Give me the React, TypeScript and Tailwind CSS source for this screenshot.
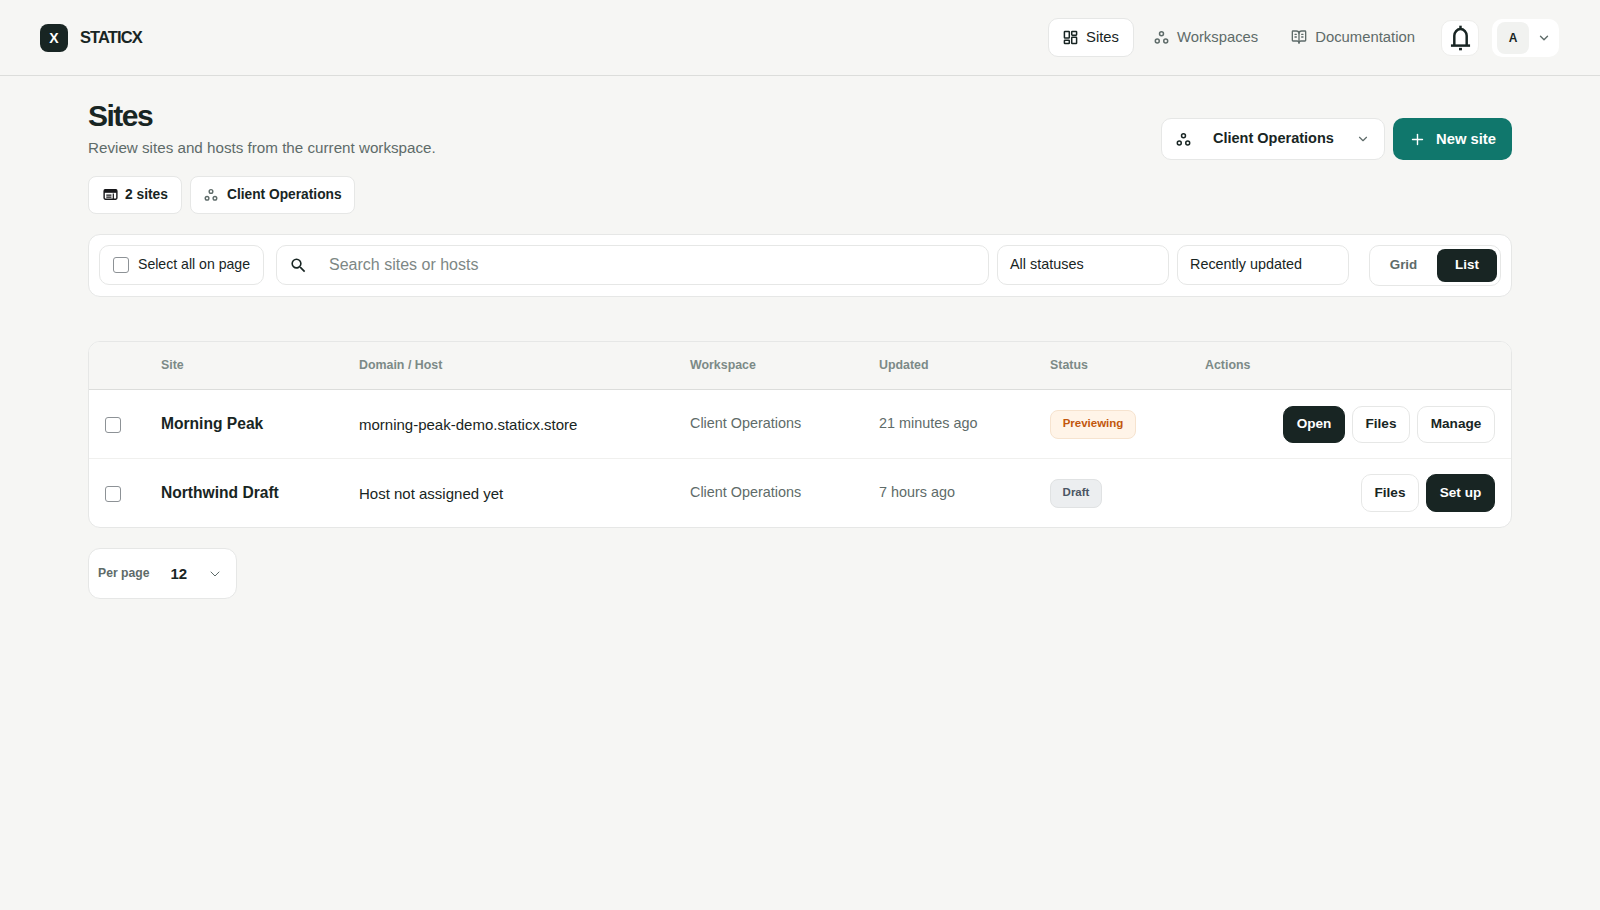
import React from "react";
import { ChevronDown, Plus, BookOpenText } from "lucide-react";
import { MdSearch } from "react-icons/md";

const Circles = ({ className }: { className?: string }) => (
  <svg viewBox="0 0 16 16" fill="none" stroke="currentColor" strokeWidth="1.6" className={className}>
    <circle cx="8" cy="4" r="2.1" />
    <circle cx="3.5" cy="11.8" r="2.1" />
    <circle cx="12.5" cy="11.8" r="2.1" />
  </svg>
);

const Dashboard = () => (
  <svg viewBox="0 0 16 16" fill="none" stroke="currentColor" strokeWidth="1.6" className="w-[15px] h-[15px]">
    <rect x="1.5" y="1.5" width="5.2" height="7" rx="0.6" />
    <rect x="9.3" y="1.5" width="5.2" height="4" rx="0.6" />
    <rect x="9.3" y="7.8" width="5.2" height="6.7" rx="0.6" />
    <rect x="1.5" y="10.8" width="5.2" height="3.7" rx="0.6" />
  </svg>
);

const Bell = () => (
  <svg viewBox="0 0 24 24" fill="none" stroke="currentColor" strokeWidth="2.2" className="w-[27px] h-[27px] text-[#182523]">
    <path d="M12 1.5v2.5" />
    <path d="M6.5 19.2V10.5a5.5 6 0 0 1 11 0v8.7" />
    <path d="M3.5 19.2h17" />
    <path d="M10.7 22.3h2.6" />
  </svg>
);

const SiteChipIcon = () => (
  <svg viewBox="0 0 16 16" fill="none" className="w-[15px] h-[15px] -mt-px text-[#18181b]">
    <rect x="1.2" y="3" width="13.6" height="10" rx="1.2" stroke="currentColor" strokeWidth="1.5" />
    <rect x="1.2" y="3" width="13.6" height="3.2" fill="currentColor" />
    <path d="M3.5 8.6H9M3.5 10.8H9M11 7v6" stroke="currentColor" strokeWidth="1.3" />
  </svg>
);

const Check = () => <span className="block w-4 h-4 rounded-[3px] border border-[#8d9296] bg-white" />;

const Btn = ({ dark, children, w }: { dark?: boolean; children: React.ReactNode; w: string }) => (
  <span
    className={
      "flex items-center justify-center rounded-[10px] text-[13.6px] font-bold border " +
      w +
      (dark ? " bg-[#182523] border-[#182523] text-white" : " bg-white border-[#e6e7e6] text-[#182523]")
    }
  >
    {children}
  </span>
);

const rowCols = "grid grid-cols-[56px_198px_331px_189px_171px_155px_1fr] items-center";

export default function App() {
  return (
    <div className="min-h-[910px] bg-[#f6f6f4] text-[#182523] font-['Liberation_Sans',Arial,sans-serif]">
      <header className="h-[76px] border-b border-[#dcdddb] flex items-center pl-10 pr-[41px]">
        <div className="w-7 h-7 rounded-lg bg-[#182523] flex items-center justify-center text-white text-sm font-bold">X</div>
        <span className="ml-3 text-[16.5px] font-bold tracking-[-0.9px]">STATICX</span>
        <nav className="ml-auto flex items-center">
          <a className="flex items-center h-[39px] w-[86px] pl-[14px] gap-[8px] bg-white border border-[#e6e7e6] rounded-[10px] text-[14.8px]">
            <Dashboard />
            Sites
          </a>
          <a className="flex items-center ml-5 gap-2 text-[14.8px] text-[#5e6b69]">
            <Circles className="w-[15px] h-[15px]" />
            Workspaces
          </a>
          <a className="flex items-center ml-[33px] gap-2 text-[14.85px] text-[#5e6b69]">
            <BookOpenText className="w-4 h-4" strokeWidth={2} />
            Documentation
          </a>
          <span className="ml-[26px] w-[38px] h-9 bg-white border border-[#eeeeec] rounded-[10px] flex items-center justify-center">
            <Bell />
          </span>
          <span className="ml-[13px] w-[67px] h-[38px] bg-white rounded-[10px] flex items-center pl-[5px]">
            <span className="w-8 h-8 rounded-lg bg-[#f1f2f0] flex items-center justify-center text-xs font-bold">A</span>
            <ChevronDown className="ml-2 w-[14px] h-[14px] text-[#5e6b69]" strokeWidth={2.4} />
          </span>
        </nav>
      </header>

      <main className="mx-[88px]">
        <div className="flex justify-between pt-[23px]">
          <div>
            <h1 className="text-[30px] leading-[34px] font-bold tracking-[-1.5px]">Sites</h1>
            <p className="mt-[5px] text-[15.2px] leading-5 text-[#5e6b69]">Review sites and hosts from the current workspace.</p>
          </div>
          <div className="flex gap-2 mt-[19px] h-[42px]">
            <span className="flex items-center w-[224px] px-[14px] bg-white border border-[#e6e7e6] rounded-[10px] text-[14.5px] font-bold">
              <Circles className="w-[15px] h-[15px]" />
              <span className="ml-[22px]">Client Operations</span>
              <ChevronDown className="ml-auto w-[14px] h-[14px] text-[#5e6b69]" />
            </span>
            <span className="flex items-center justify-center gap-[10px] w-[119px] bg-[#10776c] rounded-[10px] text-white text-[14.8px] font-bold">
              <Plus className="w-[17px] h-[17px]" />
              New site
            </span>
          </div>
        </div>

        <div className="flex gap-2 mt-[16px]">
          <span className="flex items-center h-[38px] w-[94px] pl-[14px] gap-[7px] bg-white border border-[#e6e7e6] rounded-[8px] text-[13.8px] font-bold">
            <SiteChipIcon />2 sites
          </span>
          <span className="flex items-center h-[38px] w-[165px] pl-[13px] gap-[9px] bg-white border border-[#e6e7e6] rounded-[8px] text-[13.75px] font-bold">
            <Circles className="w-[14px] h-[14px] text-[#5e6b69]" />
            Client Operations
          </span>
        </div>

        <div className="mt-[20px] h-[63px] bg-white border border-[#e6e7e6] rounded-[12px] flex items-start pt-[10px] px-[10px]">
          <span className="flex items-center h-10 w-[165px] pl-[13px] gap-[9px] border border-[#e6e7e6] rounded-[10px] text-[14.1px]">
            <Check />
            <span>Select all on page</span>
          </span>
          <span className="ml-3 flex items-center h-10 w-[713px] border border-[#e6e7e6] rounded-[10px] pl-[12px] text-base text-[#7d8785]">
            <MdSearch className="w-[19px] h-[19px] text-[#182523]" />
            <span className="ml-[21px]">Search sites or hosts</span>
          </span>
          <span className="ml-2 flex items-center h-10 w-[172px] border border-[#e6e7e6] rounded-[10px] pl-3 pb-[1px] text-[14.4px]">All statuses</span>
          <span className="ml-2 flex items-center h-10 w-[172px] border border-[#e6e7e6] rounded-[10px] pl-3 pb-[1px] text-[14.4px]">Recently updated</span>
          <span className="ml-5 flex items-center h-[41px] w-[132px] border border-[#e6e7e6] rounded-[10px] px-[3px] text-[13.4px] font-bold">
            <span className="flex-1 text-center text-[#5e6b69] pr-[3px]">Grid</span>
            <span className="w-[60px] h-[33px] rounded-[8px] bg-[#182523] text-white flex items-center justify-center">List</span>
          </span>
        </div>

        <div className="mt-[44px] bg-white border border-[#e6e7e6] rounded-[12px] overflow-hidden">
          <div className={rowCols + " h-[48px] bg-[#f6f6f4] border-b border-[#dcdddb] text-[12.4px] font-bold text-[#7c8a87]"}>
            <span />
            <span className="pl-4">Site</span>
            <span className="pl-4">Domain / Host</span>
            <span className="pl-4">Workspace</span>
            <span className="pl-4">Updated</span>
            <span className="pl-4">Status</span>
            <span className="pl-4">Actions</span>
          </div>
          <div className={rowCols + " h-[69px] border-b border-[#f0f0ee]"}>
            <span className="pl-4 pt-px"><Check /></span>
            <span className="pl-4 text-[15.6px] font-bold">Morning Peak</span>
            <span className="pl-4 text-[15px] pt-[2px]">morning-peak-demo.staticx.store</span>
            <span className="pl-4 text-[14.4px] text-[#5e6b69]">Client Operations</span>
            <span className="pl-4 text-[14.4px] text-[#5e6b69]">21 minutes ago</span>
            <span className="pl-4 flex">
              <span className="inline-flex items-center justify-center h-[29px] w-[86px] rounded-lg border border-[#f6e3cf] bg-[#fff4e8] text-[#c2570c] text-[11.5px] font-bold">Previewing</span>
            </span>
            <span className="flex justify-end gap-[7px] pr-4 h-[37px]">
              <Btn dark w="w-[62px]">Open</Btn>
              <Btn w="w-[58px]">Files</Btn>
              <Btn w="w-[78px]">Manage</Btn>
            </span>
          </div>
          <div className={rowCols + " h-[68px]"}>
            <span className="pl-4 pt-px"><Check /></span>
            <span className="pl-4 text-[15.6px] font-bold">Northwind Draft</span>
            <span className="pl-4 text-[15px] pt-[2px]">Host not assigned yet</span>
            <span className="pl-4 text-[14.4px] text-[#5e6b69] pb-px">Client Operations</span>
            <span className="pl-4 text-[14.4px] text-[#5e6b69] pb-px">7 hours ago</span>
            <span className="pl-4 flex">
              <span className="inline-flex items-center justify-center h-[29px] w-[52px] rounded-lg border border-[#e0e2e3] bg-[#eceef0] text-[#4b5563] text-[11.5px] font-bold">Draft</span>
            </span>
            <span className="flex justify-end gap-[7px] pr-4 h-[38px]">
              <Btn w="w-[58px]">Files</Btn>
              <Btn dark w="w-[69px]">Set up</Btn>
            </span>
          </div>
        </div>

        <div className="mt-[20px] flex items-center w-[149px] h-[51px] bg-white border border-[#e6e7e6] rounded-[12px] pl-[9px]">
          <span className="text-[12.2px] font-bold text-[#5e6b69]">Per page</span>
          <span className="ml-[21px] pt-px text-[15px] font-bold">12</span>
          <ChevronDown className="ml-[20px] w-4 h-4 text-[#5e6b69]" strokeWidth={1.5} />
        </div>
      </main>
    </div>
  );
}
